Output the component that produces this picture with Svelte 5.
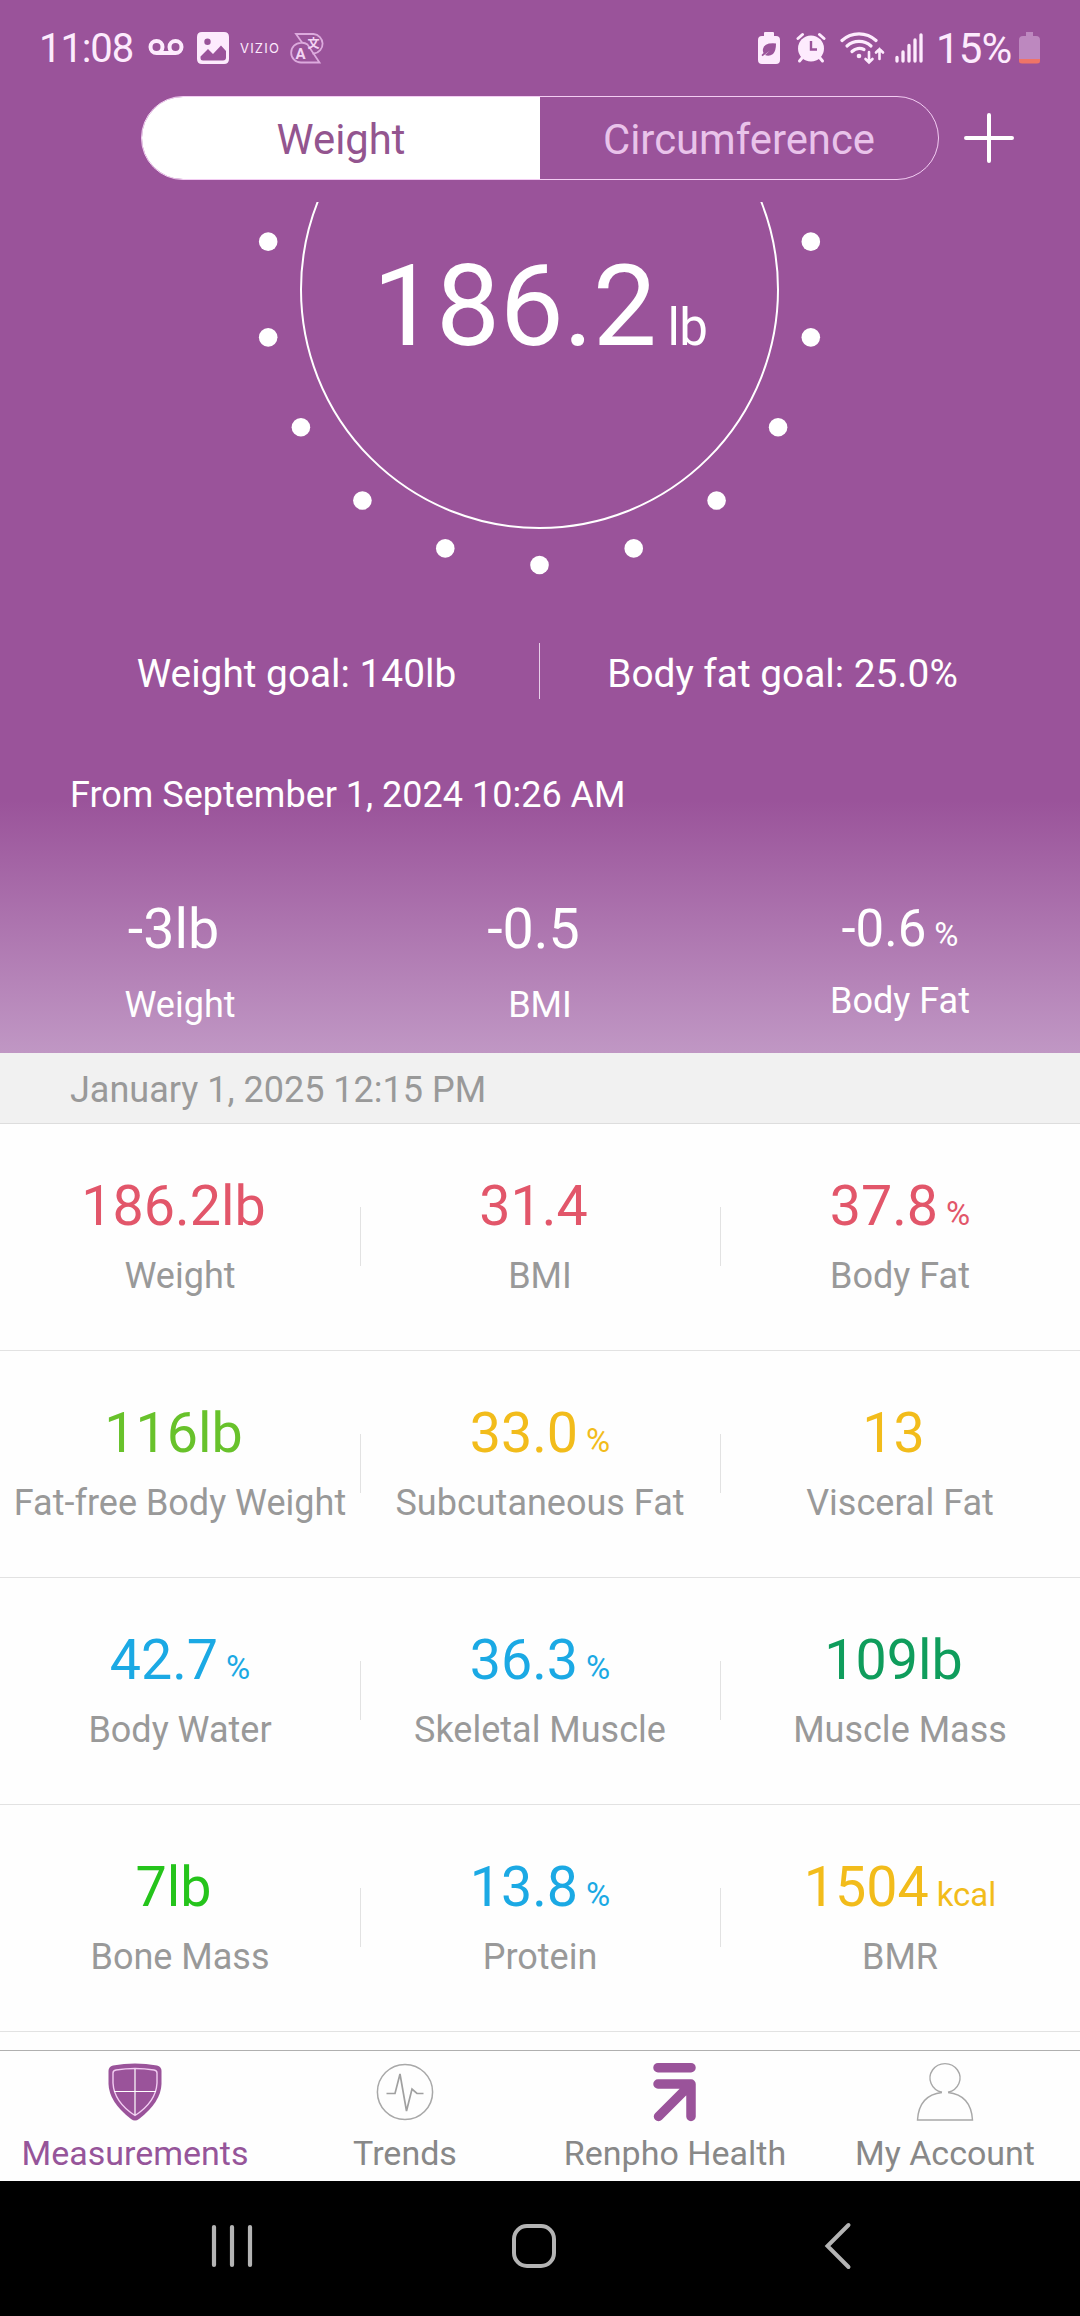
<script lang="ts">
  interface Metric {
    value: string;
    unit?: string;
    label: string;
    tone?: string;
  }

  const changes: Metric[] = [
    { value: '-3lb', label: 'Weight' },
    { value: '-0.5', label: 'BMI' },
    { value: '-0.6', unit: '%', label: 'Body Fat' },
  ];

  const rows: Metric[][] = [
    [
      { value: '186.2lb', label: 'Weight', tone: 'red' },
      { value: '31.4', label: 'BMI', tone: 'red' },
      { value: '37.8', unit: '%', label: 'Body Fat', tone: 'red' },
    ],
    [
      { value: '116lb', label: 'Fat-free Body Weight', tone: 'lime' },
      { value: '33.0', unit: '%', label: 'Subcutaneous Fat', tone: 'amber' },
      { value: '13', label: 'Visceral Fat', tone: 'amber' },
    ],
    [
      { value: '42.7', unit: '%', label: 'Body Water', tone: 'blue' },
      { value: '36.3', unit: '%', label: 'Skeletal Muscle', tone: 'blue' },
      { value: '109lb', label: 'Muscle Mass', tone: 'green' },
    ],
    [
      { value: '7lb', label: 'Bone Mass', tone: 'bright' },
      { value: '13.8', unit: '%', label: 'Protein', tone: 'blue' },
      { value: '1504', unit: 'kcal', label: 'BMR', tone: 'amber' },
    ],
  ];

  const tabs = ['Measurements', 'Trends', 'Renpho Health', 'My Account'];
  let active = $state('Measurements');
  let mode = $state('Weight');

  // Dial: dots every 20 degrees, measured from the bottom
  const dial = { cx: 539.5, cy: 87.5, r: 238.5, dotRing: 275.5 };
  const dots = [-100, -80, -60, -40, -20, 0, 20, 40, 60, 80, 100].map((deg) => {
    const a = (deg * Math.PI) / 180;
    return { x: dial.cx + dial.dotRing * Math.sin(a), y: dial.cy + dial.dotRing * Math.cos(a) };
  });
</script>

<div class="screen">
  <div class="hero">
    <div class="status">
      <span class="time">11:08</span>
      <svg class="voicemail" width="36" height="18" viewBox="0 0 36 18">
        <g fill="none" stroke="currentColor" stroke-width="4">
          <circle cx="8.5" cy="8" r="6" />
          <circle cx="27.5" cy="8" r="6" />
          <path d="M8.5 14H27.5" />
        </g>
      </svg>
      <svg class="photo" width="32" height="32" viewBox="0 0 32 32">
        <path fill="currentColor" fill-rule="evenodd" d="M5 0H27Q32 0 32 5V27Q32 32 27 32H5Q0 32 0 27V5Q0 0 5 0ZM10.500 6.500A3.200 3.200 0 1 0 10.500 12.900A3.200 3.200 0 1 0 10.500 6.500ZM3.500 24.500L11 17L16 22L24 13.500L29 19V25.500Q29 28.500 26 28.500H6Q3.500 28.500 3.500 26Z" />
      </svg>
      <span class="vizio">VIZIO</span>
      <svg class="translate" width="36" height="32" viewBox="0 0 36 32">
        <g fill="none" stroke="currentColor" stroke-width="1.800">
          <path d="M12 10.500L6 2H23.500A9.800 9.800 0 0 1 24 21.500H22.500" />
          <path d="M11 10.800A9.600 9.600 0 0 0 11 30.500H29.500L17.500 12.500Q15 10.500 11 10.800Z" />
        </g>
        <text x="10.500" y="26.500" class="glyph-a">A</text>
        <text x="23.500" y="16" class="glyph-wen">文</text>
      </svg>
      <div class="status-right">
        <svg width="22" height="32" viewBox="0 0 22 32">
          <path fill="currentColor" fill-rule="evenodd" d="M7 0H15Q16 0 16 1V4H18Q22 4 22 8V28Q22 32 18 32H4Q0 32 0 28V8Q0 4 4 4H6V1Q6 0 7 0ZM18 11.500Q6 10.500 5 17Q4.500 19 5.500 21L3.500 23L4.500 24.200L12 18.500L7 23Q11 25 15 22Q18 19 18 11.500Z" />
        </svg>
        <svg class="alarm" width="30" height="32" viewBox="0 0 30 32">
          <g fill="none" stroke="currentColor" stroke-linecap="round">
            <path d="M2 6.500L6.500 2.500M28 6.500L23.500 2.500" stroke-width="3" />
            <path d="M6 26L3.500 29M24 26L26.500 29" stroke-width="3" />
          </g>
          <circle cx="15" cy="16.500" r="13" fill="currentColor" />
          <path d="M15 9V17.500H21" fill="none" stroke="#9a539a" stroke-width="2.400" />
        </svg>
        <svg class="wifi" width="46" height="34" viewBox="0 0 46 34">
          <g fill="none" stroke="currentColor" stroke-width="3.200" stroke-linecap="round">
            <path d="M2 9.500A25 25 0 0 1 36 9.500" />
            <path d="M7 15A18 18 0 0 1 31 15" />
            <path d="M12 20.500A10.500 10.500 0 0 1 24 18.500" />
            <path d="M29 21V31M25.500 28L29 31.500L32.500 28M39.500 28V18M36 21.500L39.500 18L43 21.500" stroke-width="2.600" />
          </g>
          <circle cx="19" cy="25" r="2.300" fill="currentColor" />
        </svg>
        <svg class="signal" width="28" height="30" viewBox="0 0 28 30">
          <path d="M2 24.500V28M8 19V28M14 12.500V28M20 7V28M26 1.800V28" stroke="currentColor" stroke-width="3.300" stroke-linecap="round" />
        </svg>
        <span class="percent">15%</span>
        <svg width="21" height="32" viewBox="0 0 21 32">
          <path d="M7 0H14V4H17Q21 4 21 8V27H0V8Q0 4 4 4H7Z" fill="#bd88bf" />
          <path d="M0 27H21V29Q21 31.500 18 31.500H3Q0 31.500 0 29Z" fill="#ef7468" />
        </svg>
      </div>
    </div>

    <div class="switcher">
      <div class="segments">
        <button class:on={mode === 'Weight'} onclick={() => (mode = 'Weight')}>Weight</button>
        <button class:on={mode === 'Circumference'} onclick={() => (mode = 'Circumference')}>Circumference</button>
      </div>
      <svg width="50" height="50" viewBox="0 0 50 50">
        <path d="M2 25H48M25 2V48" stroke="#fff" stroke-width="4" stroke-linecap="round" />
      </svg>
    </div>

    <div class="dial">
      <svg width="1080" height="400" viewBox="0 0 1080 400">
        <circle cx={dial.cx} cy={dial.cy} r={dial.r} fill="none" stroke="#fff" stroke-width="2" />
        {#each dots as d}
          <circle cx={d.x} cy={d.y} r="9.300" fill="#fff" />
        {/each}
      </svg>
      <div class="reading">186.2<span>lb</span></div>
    </div>

    <div class="goals">
      <span>Weight goal: 140lb</span>
      <span>Body fat goal: 25.0%</span>
    </div>

    <div class="since">From September 1, 2024 10:26 AM</div>

    <div class="changes">
      {#each changes as c}
        <div class="change" class:with-unit={c.unit}>
          <div class="num">{c.value}<span class="unit">{c.unit ?? ''}</span></div>
          <div class="name">{c.label}</div>
        </div>
      {/each}
    </div>
  </div>

  <div class="date">January 1, 2025 12:15 PM</div>

  <div class="metrics">
    {#each rows as row}
      <div class="row">
        {#each row as m}
          <div class="cell">
            <div class="num {m.tone}">{m.value}<span class="unit">{m.unit ?? ''}</span></div>
            <div class="name">{m.label}</div>
          </div>
        {/each}
      </div>
    {/each}
  </div>

  <nav class="tabs">
    {#each tabs as tab}
      <button class:active={tab === active} onclick={() => (active = tab)}>
        <svg width="60" height="60" viewBox="0 0 60 60" fill="none">
          {#if tab === 'Measurements'}
            <path d="M8 3.500Q30 -0.500 52 3.500Q56.500 4.500 56.500 9V22Q56 40 34 57Q30 60 26 57Q4 40 3.500 22V9Q3.500 4.500 8 3.500Z" fill="#9a539a" />
            <path d="M11 8Q30 5 49 8Q52 8.500 52 11V21Q51 40 30 53.500Q9 40 8 21V11Q8 8.500 11 8Z" stroke="#f3cdf3" stroke-width="1.400" />
            <path d="M30 7V53M9 29.500H51" stroke="#fff" stroke-width="1.200" />
          {:else if tab === 'Trends'}
            <circle cx="30" cy="30" r="27.600" stroke="#a8a8a8" stroke-width="1.500" />
            <path d="M11.500 31.500H20L25 12L31.500 49L37 27L42 31.500H48.500" stroke="#a0a0a0" stroke-width="1.700" />
          {:else if tab === 'Renpho Health'}
            <path d="M13 5.700H46M13 22H46V54.500M46 22L13.500 54.500" stroke="#9a539a" stroke-width="9.500" stroke-linecap="round" stroke-linejoin="round" />
          {:else}
            <path d="M27 30.300A15 14.500 0 1 1 33 30.300" stroke="#a8a8a8" stroke-width="1.400" />
            <path d="M27 30.500Q4 33 2.500 58H57.500Q56 33 33 30.500" stroke="#a8a8a8" stroke-width="1.400" />
          {/if}
        </svg>
        <span>{tab}</span>
      </button>
    {/each}
  </nav>

  <div class="sysbar">
    <svg width="44" height="46" viewBox="0 0 44 46">
      <path d="M4 4V42M22 4V42M40 4V42" stroke="#b4b4b4" stroke-width="4.200" stroke-linecap="round" />
    </svg>
    <svg width="46" height="46" viewBox="0 0 46 46">
      <rect x="3" y="3" width="40" height="40" rx="13" fill="none" stroke="#b4b4b4" stroke-width="4" />
    </svg>
    <svg width="28" height="48" viewBox="0 0 28 48">
      <path d="M24.500 3L3.500 24L24.500 45" fill="none" stroke="#b4b4b4" stroke-width="4" stroke-linecap="round" />
    </svg>
  </div>
</div>

<style>
  :global(body) {
    margin: 0;
    background: #fefefe;
  }
  .screen {
    width: 1080px;
    height: 2316px;
    display: flex;
    flex-direction: column;
    overflow: hidden;
    background: #fefefe;
    font-family: Roboto, sans-serif;
    font-size: 36px;
    color: #999;
  }
  svg { display: block; flex: none; }
  button {
    border: 0;
    padding: 0;
    background: none;
    font: inherit;
    color: inherit;
  }
  .hero {
    height: 1053px;
    flex: none;
    display: flex;
    flex-direction: column;
    color: #fff;
    background: linear-gradient(to bottom, #9a539a 0, #9a539a 800px, #c097c4 1053px);
  }

  /* Status bar */
  .status {
    height: 96px;
    box-sizing: border-box;
    padding: 0 40px 0 39px;
    display: flex;
    align-items: center;
    color: #fdebfd;
  }
  .time {
    width: 109px;
    font-size: 40px;
    letter-spacing: -1.1px;
  }
  .photo { margin-left: 13px; }
  .vizio {
    width: 42px;
    margin-left: 11px;
    font-family: Inter, sans-serif;
    font-size: 13px;
    letter-spacing: 1.2px;
  }
  .translate {
    margin-left: 8px;
    color: #dcaadd;
  }
  .translate text {
    fill: #f3d3f3;
    text-anchor: middle;
  }
  .glyph-a {
    font-size: 15px;
    font-weight: 700;
  }
  .glyph-wen {
    font-family: "Noto Sans CJK JP", sans-serif;
    font-size: 12px;
    font-weight: 700;
  }
  .status-right {
    width: 282px;
    margin-left: auto;
    display: flex;
    align-items: center;
  }
  .alarm { margin-left: 16px; }
  .wifi { margin-left: 14px; }
  .signal { margin-left: 9px; }
  .percent {
    flex: 1;
    margin-left: 13px;
    font-size: 42px;
    letter-spacing: -0.8px;
  }

  .switcher {
    height: 84px;
    padding-left: 141px;
    display: flex;
    align-items: center;
    gap: 25px;
  }
  .segments {
    width: 798px;
    height: 84px;
    box-sizing: border-box;
    display: flex;
    border: 1px solid #f3cdf3;
    border-radius: 42px;
    overflow: hidden;
  }
  .segments button {
    flex: 1;
    padding-top: 2px;
    font-size: 41.8px;
    color: #e9c3ea;
  }
  .segments .on {
    background: #fff;
    color: #93558f;
  }

  .dial {
    position: relative;
    height: 400px;
    margin-top: 22px;
  }
  .reading {
    position: absolute;
    top: 36px;
    left: 0;
    width: 1080px;
    text-align: center;
    font-size: 114px;
    line-height: 136px;
    letter-spacing: -0.5px;
  }
  .reading span {
    font-size: 51px;
    margin-left: 11px;
  }

  .goals {
    height: 56px;
    margin-top: 41px;
    padding: 0 55px 0 54px;
    display: flex;
    text-align: center;
    font-size: 38.8px;
  }
  .goals span {
    flex: 1;
    height: 56px;
    line-height: 62px;
  }
  .goals span + span { border-left: 1px solid #e8cfe9; }
  .since {
    margin: 75px 0 0 70px;
    line-height: 42px;
  }

  .changes {
    display: flex;
    margin-top: 80px;
  }
  .change {
    flex: 1;
    text-align: center;
  }
  .num {
    font-size: 55.6px;
    line-height: 66px;
  }
  .change .name {
    margin-top: 22px;
    line-height: 42px;
  }
  .change.with-unit .num { font-size: 51px; }
  .change.with-unit .name { margin-top: 18px; }
  /* an empty unit still keeps its gap beside the value */
  .unit {
    font-size: 33px;
    line-height: 0;
    margin-left: 8px;
  }
  .unit:empty { margin-left: 13px; }

  .date {
    height: 70px;
    flex: none;
    padding-left: 70px;
    line-height: 74px;
    background: #f1f1f1;
    border-bottom: 1px solid #ddd;
  }

  .metrics {
    height: 926px;
    flex: none;
    overflow: hidden;
  }
  .row {
    height: 226px;
    display: flex;
    border-bottom: 1px solid #e2e2e2;
  }
  .cell {
    position: relative;
    width: 360px;
    padding-top: 49px;
    text-align: center;
  }
  .cell + .cell::before {
    content: '';
    position: absolute;
    left: 0;
    top: 83px;
    width: 1px;
    height: 59px;
    background: #e2e2e2;
  }
  .cell .name {
    margin-top: 16px;
    line-height: 42px;
    white-space: nowrap;
  }
  .red { color: #e2566a; }
  .lime { color: #68c22b; }
  .amber { color: #f2bc1b; }
  .blue { color: #1ba9e4; }
  .green { color: #0f9d5c; }
  .bright { color: #25c41b; }

  .tabs {
    height: 130px;
    flex: none;
    display: flex;
    border-top: 1px solid #b0b0b0;
  }
  .tabs button {
    flex: 1;
    display: flex;
    flex-direction: column;
    align-items: center;
    padding-top: 11px;
    font-size: 34px;
    color: #888;
  }
  .tabs span {
    margin-top: 11px;
    line-height: 40px;
  }
  .tabs .active { color: #96559a; }

  .sysbar {
    flex: 1;
    display: flex;
    align-items: center;
    padding: 0 0 5px 210px;
    background: #000;
  }
  .sysbar svg:nth-child(2) { margin-left: 257px; }
  .sysbar svg:nth-child(3) { margin-left: 267px; }
</style>
